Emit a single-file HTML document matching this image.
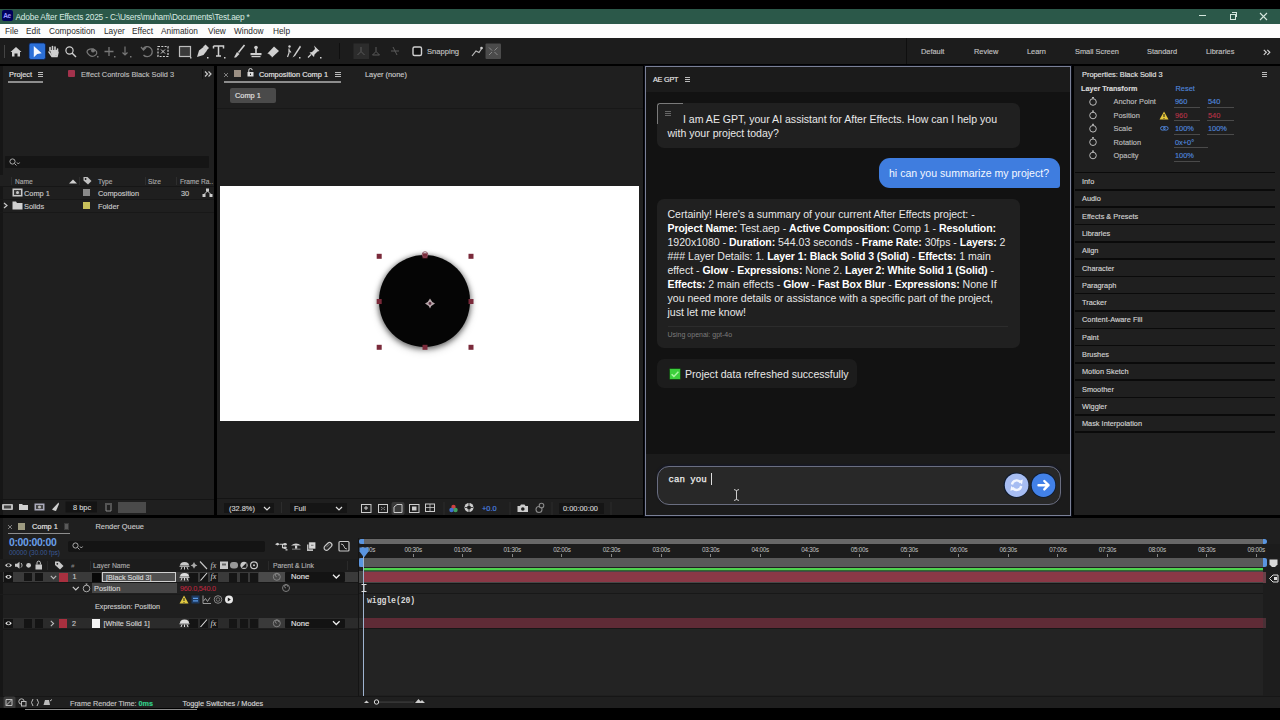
<!DOCTYPE html>
<html><head><meta charset="utf-8">
<style>
*{margin:0;padding:0;box-sizing:border-box}
html,body{width:1280px;height:720px;overflow:hidden;background:#000;font-family:"Liberation Sans",sans-serif;color:#c8c8c8}
.a{position:absolute;white-space:nowrap}
svg.a{overflow:visible}
#title{left:0;top:9px;width:1280px;height:15px;background:#2b5849}
#menu{left:0;top:24px;width:1280px;height:14px;background:#fcfcfc}
.m{top:2px;font-size:8.3px;color:#2a2a2a;line-height:10px}
#tool{left:0;top:38px;width:1280px;height:26px;background:#1c1c1c}
.pn{background:#1f1f1f}
.t{font-size:7.4px;color:#c9c9c9;line-height:9px;-webkit-text-stroke:0.15px currentColor}
</style></head><body>
<style>.ch{font-size:10.55px;color:#e8e8e8;line-height:12px}.ch b{font-weight:bold;color:#fff;letter-spacing:-0.1px}</style>
<!-- title bar -->
<div class="a" id="title">
  <div class="a" style="left:1.5px;top:1px;width:11px;height:11px;background:#00005b;border-radius:2px;color:#9999ff;font-size:6.5px;font-weight:bold;line-height:11px;text-align:center;letter-spacing:-0.3px">Ae</div>
  <div class="a" style="left:15.5px;top:1.5px;font-size:8.3px;color:#d8ebe2;line-height:13px;letter-spacing:-0.17px">Adobe After Effects 2025 - C:\Users\muham\Documents\Test.aep *</div>
  <div class="a" style="left:1199px;top:6px;width:7px;height:1px;background:#d5e6de"></div>
  <div class="a" style="left:1230px;top:5px;width:6px;height:6px;border:1px solid #d5e6de"></div>
  <div class="a" style="left:1232px;top:3px;width:5px;height:5px;border-top:1px solid #d5e6de;border-right:1px solid #d5e6de"></div>
  <svg class="a" style="left:1259px;top:3px" width="9" height="9"><path d="M1 1L8 8M8 1L1 8" stroke="#d5e6de" stroke-width="1.1"/></svg>
</div>
<div class="a" id="menu">
  <div class="a m" style="left:5px">File</div>
  <div class="a m" style="left:26px">Edit</div>
  <div class="a m" style="left:49px">Composition</div>
  <div class="a m" style="left:104px">Layer</div>
  <div class="a m" style="left:132px">Effect</div>
  <div class="a m" style="left:161px">Animation</div>
  <div class="a m" style="left:208px">View</div>
  <div class="a m" style="left:234px">Window</div>
  <div class="a m" style="left:273px">Help</div>
</div>
<div class="a" id="tool">
  <div class="a" style="left:4px;top:7px;width:1px;height:13px;background:#444"></div>
  <svg class="a" style="left:0;top:0" width="340" height="26">
    <g fill="#d0d0d0" stroke="none">
      <!-- home -->
      <path d="M10.5 14L16 9L21.5 14L20 14L20 18.5L17.5 18.5L17.5 15.5L14.5 15.5L14.5 18.5L12 18.5L12 14Z"/>
    </g>
    <rect x="29" y="5" width="16.5" height="16.5" rx="2" fill="#2c70d8" stroke="#0b2250" stroke-width="0.8"/>
    <path d="M33.8 8L41.7 15.3L37.2 16L33.8 19.3Z" fill="#f4f8ff"/>
    <!-- hand -->
    <path d="M50 12.5L50 9.5M52.5 12L52.5 8.5M55 12L55 9M57.5 13L57.5 11M49 14L52 18.5L57 18.5L58 14" stroke="#d0d0d0" stroke-width="1.6" fill="none" stroke-linecap="round"/>
    <path d="M50 12L58 12L57.5 17.5L52 18.5Z" fill="#d0d0d0"/>
    <!-- magnifier -->
    <circle cx="69.5" cy="12.5" r="3.6" stroke="#d0d0d0" stroke-width="1.2" fill="none"/>
    <path d="M72 15L76 19" stroke="#d0d0d0" stroke-width="1.4"/>
    <!-- orbit (dim) -->
    <path d="M87 14C87 11 92 10 95 12C98 14 97 17 94 18C91 19 88 17 87 14Z" stroke="#777" stroke-width="1.2" fill="none"/>
    <circle cx="93" cy="12.5" r="2" fill="#777"/>
    <rect x="97" y="18" width="1.5" height="1.5" fill="#777"/>
    <!-- plus -->
    <path d="M109 9L109 18M104.5 13.5L113.5 13.5" stroke="#777" stroke-width="1.3"/>
    <rect x="114" y="18" width="1.5" height="1.5" fill="#777"/>
    <!-- down arrow -->
    <path d="M125 8.5L125 17M122.5 14.5L125 17L127.5 14.5" stroke="#777" stroke-width="1.2" fill="none"/>
    <rect x="130" y="18" width="1.5" height="1.5" fill="#777"/>
    <!-- rotate -->
    <path d="M143 11A5 5 0 1 1 143.5 17" stroke="#777" stroke-width="1.3" fill="none"/>
    <path d="M141 9L143.5 12L146 9.5" stroke="#777" stroke-width="1.2" fill="none"/>
    <!-- dotted box -->
    <rect x="158" y="8.5" width="10" height="10" stroke="#d0d0d0" stroke-width="1.2" stroke-dasharray="2 1.3" fill="none"/>
    <path d="M161 11.5L165 15.5M165 11.5L161 15.5" stroke="#d0d0d0" stroke-width="1"/>
    <!-- rect -->
    <rect x="179.5" y="8.5" width="11" height="10" stroke="#bdbdbd" stroke-width="1.2" fill="#3a3a3a"/>
    <rect x="190" y="19" width="1.5" height="1.5" fill="#bdbdbd"/>
    <!-- pen -->
    <path d="M197 19L199 12.5L203.5 9L207 12.5L203.5 17Z" fill="#d0d0d0"/>
    <path d="M203 9L205.5 6.5L209 10L206.5 12.5" fill="#d0d0d0"/>
    <rect x="207" y="19" width="1.5" height="1.5" fill="#d0d0d0"/>
    <!-- T -->
    <path d="M213.5 8L223.5 8L223.5 10.5M213.5 8L213.5 10.5M218.5 8L218.5 18M216 18L221 18" stroke="#d0d0d0" stroke-width="1.5" fill="none"/>
    <rect x="224" y="19" width="1.5" height="1.5" fill="#d0d0d0"/>
    <!-- brush -->
    <path d="M244.5 7L238.5 14.5" stroke="#d0d0d0" stroke-width="1.6"/>
    <path d="M237 14L239.5 16L236 19.5L234 19.5Z" fill="#d0d0d0"/>
    <!-- stamp -->
    <circle cx="256" cy="9.5" r="1.8" fill="#d0d0d0"/>
    <rect x="255.2" y="10" width="1.6" height="5" fill="#d0d0d0"/>
    <rect x="250.5" y="15" width="11" height="2.2" fill="#d0d0d0"/>
    <rect x="251.5" y="18" width="9" height="1.2" fill="#d0d0d0"/>
    <!-- eraser -->
    <path d="M267.5 15.5L274 8.5L279 13L272 19.5Z" fill="#d0d0d0"/>
    <path d="M268.5 15.5L272 19L271 19.5L268 16.5Z" fill="#1c1c1c"/>
    <!-- puppet -->
    <circle cx="289.5" cy="8.5" r="1.2" fill="#d0d0d0"/>
    <path d="M289 10.5L289 15L287.5 19M289 12L291 14.5" stroke="#d0d0d0" stroke-width="1.2" fill="none"/>
    <path d="M300 7.5L294 17L292.5 19.5L295 18L301 9" fill="#d0d0d0"/>
    <rect x="299" y="19" width="1.5" height="1.5" fill="#d0d0d0"/>
    <!-- pin -->
    <path d="M314 7.5L319.5 13L317.5 13.5L314.5 16.5L314 19L309.5 14.5L312 14L315 11L314.5 9Z" fill="#d0d0d0"/>
    <path d="M311 16.5L308 19.5" stroke="#d0d0d0" stroke-width="1.2"/>
    <rect x="320" y="19" width="1.5" height="1.5" fill="#d0d0d0"/>
    <!-- sep -->
    <rect x="339" y="5" width="1" height="16" fill="#0f0f0f"/>
    <!-- axis buttons -->
    <rect x="353.5" y="5.5" width="15.5" height="15.5" fill="#2c2c2c"/>
    <path d="M361 9L361 13.5L357.5 17M361 13.5L364.5 17" stroke="#5a5a5a" stroke-width="1" fill="none"/>
    <path d="M376 9L376 13.5L372.5 17M376 13.5L379.5 17M372.5 17L379.5 17" stroke="#5a5a5a" stroke-width="1" fill="none"/>
    <path d="M393 9L397 17M391 13L399 13" stroke="#5a5a5a" stroke-width="1" fill="none"/>
    <rect x="413" y="9" width="8.5" height="8.5" rx="1.5" stroke="#d0d0d0" stroke-width="1.4" fill="#111"/>
    <path d="M472 18L476 13L479 14.5L482 10" stroke="#bdbdbd" stroke-width="1.2" fill="none"/>
    <circle cx="481.5" cy="10" r="1.3" fill="#d0d0d0"/>
    <rect x="485.5" y="5.5" width="15.5" height="15.5" rx="1" fill="#4b4b4b"/>
    <path d="M489 9.5L492 12.5M497.5 9.5L494.5 12.5M489 17L492 14M497.5 17L494.5 14" stroke="#8a8a8a" stroke-width="1"/>
  </svg>
  <div class="a t" style="left:427px;top:9px;font-size:7.6px;color:#c0c0c0">Snapping</div>
  <div class="a" style="left:906px;top:0;width:1px;height:26px;background:#0f0f0f"></div>
  <div class="a t" style="left:921px;top:9px;color:#c0c0c0">Default</div>
  <div class="a t" style="left:974px;top:9px;color:#c0c0c0">Review</div>
  <div class="a t" style="left:1027px;top:9px;color:#c0c0c0">Learn</div>
  <div class="a t" style="left:1075px;top:9px;color:#c0c0c0">Small Screen</div>
  <div class="a t" style="left:1147px;top:9px;color:#c0c0c0">Standard</div>
  <div class="a t" style="left:1206px;top:9px;color:#c0c0c0">Libraries</div>
  <svg class="a" style="left:1262.5px;top:10.5px" width="8" height="7"><path d="M0.8 0.8L3.3 3.3L0.8 5.8M4.3 0.8L6.8 3.3L4.3 5.8" stroke="#d0d0d0" stroke-width="1.2" fill="none"/></svg>
</div>
<!-- ============ PROJECT PANEL ============ -->
<div class="a pn" style="left:0;top:66px;width:214px;height:449px">
  <div class="a" style="left:0;top:0;width:3px;height:449px;background:#161616"></div>
  <div class="a t" style="left:9px;top:4px;color:#e0e0e0">Project</div>
  <div class="a" style="left:38px;top:6px;width:5px;height:1px;background:#bbb;box-shadow:0 2px 0 #bbb,0 4px 0 #bbb"></div>
  <div class="a" style="left:8px;top:15px;width:35px;height:2px;background:#8d8d8d"></div>
  <div class="a" style="left:68px;top:4px;width:7px;height:7px;background:#a3324c;border-radius:1px"></div>
  <div class="a t" style="left:81px;top:4px;color:#bdbdbd">Effect Controls Black Solid 3</div>
  <div class="a" style="left:202px;top:3px;width:1px;height:10px;background:#111"></div>
  <svg class="a" style="left:204px;top:4px" width="8" height="8"><path d="M1 1.5L3.5 4L1 6.5M4.5 1.5L7 4L4.5 6.5" stroke="#c8c8c8" stroke-width="1.2" fill="none"/></svg>
  <!-- search -->
  <div class="a" style="left:5px;top:90px;width:204px;height:12px;background:#151515;border-radius:1px"></div>
  <svg class="a" style="left:9px;top:92px" width="12" height="9"><circle cx="3.5" cy="3.5" r="2.6" stroke="#aaa" stroke-width="1" fill="none"/><path d="M5.5 5.5L7.5 7.5M8 4.5L9.3 6L10.6 4.5" stroke="#aaa" stroke-width="1" fill="none"/></svg>
  <!-- headers -->
  <div class="a" style="left:0;top:109px;width:214px;height:12px;background:#1f1f1f;border-bottom:1px solid #161616"></div>
  <div class="a" style="left:11px;top:111px;width:1px;height:8px;background:#2e2e2e"></div>
  <div class="a t" style="left:15px;top:111px;font-size:6.6px;color:#a9a9a9">Name</div>
  <svg class="a" style="left:69px;top:113px" width="8" height="5"><path d="M0 4.5L4 0.5L8 4.5Z" fill="#d0d0d0"/></svg>
  <div class="a" style="left:79px;top:111px;width:1px;height:8px;background:#2e2e2e"></div>
  <svg class="a" style="left:83px;top:110px" width="9" height="9"><path d="M0.5 1L4.5 1L8.5 5L5 8.5L0.5 4.5Z" fill="#c0c0c0"/><circle cx="2.6" cy="3" r="0.9" fill="#1f1f1f"/></svg>
  <div class="a t" style="left:98px;top:111px;font-size:6.6px;color:#a9a9a9">Type</div>
  <div class="a" style="left:145px;top:111px;width:1px;height:8px;background:#2e2e2e"></div>
  <div class="a t" style="left:148px;top:111px;font-size:6.6px;color:#a9a9a9">Size</div>
  <div class="a" style="left:176px;top:111px;width:1px;height:8px;background:#2e2e2e"></div>
  <div class="a t" style="left:180px;top:111px;font-size:6.6px;color:#a9a9a9">Frame Ra..</div>
  <!-- rows -->
  <div class="a" style="left:0;top:133px;width:214px;height:1px;background:#181818"></div>
  <div class="a" style="left:0;top:146px;width:214px;height:1px;background:#181818"></div>
  <svg class="a" style="left:12px;top:122px" width="11" height="9"><rect x="0.5" y="0.5" width="10" height="8" fill="#c8c8c8"/><rect x="2" y="2" width="7" height="5" fill="#3a3a3a"/><circle cx="5.5" cy="4.5" r="1.5" fill="#c8c8c8"/></svg>
  <div class="a t" style="left:24px;top:123px;color:#c8c8c8">Comp 1</div>
  <div class="a" style="left:83px;top:123px;width:7px;height:7px;background:#8a8a8a"></div>
  <div class="a t" style="left:98px;top:123px;color:#c8c8c8">Composition</div>
  <div class="a t" style="left:181px;top:123px;color:#c8c8c8">30</div>
  <svg class="a" style="left:202px;top:122px" width="11" height="10"><rect x="4" y="0.5" width="3" height="3" fill="#ccc"/><rect x="0.5" y="6" width="3" height="3" fill="#ccc"/><rect x="7.5" y="6" width="3" height="3" fill="#ccc"/><path d="M5.5 3L2 6.5M5.5 3L9 6.5" stroke="#ccc" stroke-width="1"/></svg>
  <svg class="a" style="left:3px;top:136px" width="5" height="7"><path d="M1 1L4 3.5L1 6" stroke="#c8c8c8" stroke-width="1.2" fill="none"/></svg>
  <svg class="a" style="left:12px;top:135px" width="11" height="9"><path d="M0.5 0.5L4 0.5L5 2L10.5 2L10.5 8.5L0.5 8.5Z" fill="#d0d0d0"/></svg>
  <div class="a t" style="left:24px;top:136px;color:#c8c8c8">Solids</div>
  <div class="a" style="left:83px;top:136px;width:7px;height:7px;background:#c8c05a"></div>
  <div class="a t" style="left:98px;top:136px;color:#c8c8c8">Folder</div>
  <!-- bottom bar -->
  <div class="a" style="left:0;top:433px;width:214px;height:1px;background:#141414"></div>
  <svg class="a" style="left:0;top:434px" width="214" height="15">
    <rect x="2" y="4" width="11" height="6" rx="1" fill="#bdbdbd"/><rect x="4" y="5.5" width="7" height="3" fill="#444"/>
    <path d="M19 4L22 4L23 5L28 5L28 10L19 10Z" fill="#cfcfcf"/>
    <rect x="34.5" y="3.5" width="10" height="7" fill="#aab"/><rect x="36" y="5" width="7" height="4" fill="#444"/><circle cx="39.5" cy="7" r="1.5" fill="#bbb"/>
    <path d="M58.5 2.5L52 9.5L54 10.5L56 11L59 4Z" fill="#cfcfcf"/>
    <rect x="65.5" y="1.5" width="31.5" height="11" fill="#141414"/>
    <path d="M105 4L112 4M106 5L106 11L111 11L111 5" stroke="#8a8a8a" stroke-width="1" fill="none"/>
    <rect x="118" y="2" width="28" height="11" fill="#4a4a4a"/>
  </svg>
  <div class="a t" style="left:73px;top:437px;color:#d0d0d0">8 bpc</div>
</div>
<!-- ============ COMP PANEL ============ -->
<div class="a pn" style="left:217px;top:66px;width:426px;height:449px;overflow:hidden">
  <svg class="a" style="left:6px;top:6px" width="6" height="6"><path d="M1 1L5 5M5 1L1 5" stroke="#888" stroke-width="0.9"/></svg>
  <div class="a" style="left:17px;top:4px;width:6.5px;height:7px;background:#9b8f83"></div>
  <svg class="a" style="left:30px;top:2px" width="7" height="9"><path d="M1.8 4L1.8 2.2A1.7 1.7 0 0 1 5.2 2.2" stroke="#ddd" stroke-width="1" fill="none"/><rect x="0.5" y="4" width="6" height="4.5" fill="#ddd"/><rect x="3" y="5.5" width="1" height="1.5" fill="#1f1f1f"/></svg>
  <div class="a t" style="left:42px;top:4px;color:#e6e6e6">Composition Comp 1</div>
  <div class="a" style="left:118px;top:6px;width:6px;height:1px;background:#bbb;box-shadow:0 2px 0 #bbb,0 4px 0 #bbb"></div>
  <div class="a" style="left:7px;top:14.5px;width:117px;height:2px;background:#8d8d8d"></div>
  <div class="a t" style="left:148px;top:4px;color:#c8c8c8">Layer (none)</div>
  <div class="a" style="left:12.5px;top:21.5px;width:46px;height:15.5px;background:#4a4a4a;border-radius:2px"></div>
  <div class="a t" style="left:18px;top:25px;color:#e0e0e0">Comp 1</div>
  <div class="a" style="left:0;top:42px;width:426px;height:1px;background:#181818"></div>
  <!-- canvas -->
  <div class="a" style="left:3px;top:120px;width:419px;height:235px;background:#fff"></div>
  <!-- bottom bar -->
  <div class="a" style="left:0;top:431.5px;width:426px;height:1px;background:#141414"></div>
  <div class="a" style="left:7px;top:437px;width:50px;height:10px;background:#151515"></div>
  <div class="a t" style="left:12px;top:438px;color:#d0d0d0">(32.8%)</div>
  <svg class="a" style="left:46px;top:440px" width="8" height="5"><path d="M1 1L4 4L7 1" stroke="#ddd" stroke-width="1.2" fill="none"/></svg>
  <div class="a" style="left:64px;top:436px;width:1px;height:11px;background:#2c2c2c"></div>
  <div class="a" style="left:73px;top:437px;width:57px;height:10px;background:#151515"></div>
  <div class="a t" style="left:77px;top:438px;color:#d0d0d0">Full</div>
  <svg class="a" style="left:118px;top:440px" width="8" height="5"><path d="M1 1L4 4L7 1" stroke="#ddd" stroke-width="1.2" fill="none"/></svg>
  <svg class="a" style="left:140px;top:433.5px" width="290" height="17">
    <rect x="4.5" y="4.5" width="9.5" height="8" stroke="#ccc" stroke-width="1" fill="none"/><path d="M9 6L9 10M7 8L11 8" stroke="#ccc" stroke-width="1"/>
    <rect x="21.5" y="4.5" width="9" height="8" stroke="#ccc" stroke-width="1" fill="none"/><path d="M24 7L28 10M28 7L24 10" stroke="#ccc" stroke-width="0.8" stroke-dasharray="1 1"/>
    <rect x="34.5" y="2" width="13" height="13" rx="2" fill="#3a3a3a"/><path d="M37 12.5L37 7L40 4.5L45 4.5L45 12.5Z" stroke="#ccc" stroke-width="1" fill="none"/>
    <rect x="52.5" y="4.5" width="9.5" height="8" stroke="#ccc" stroke-width="1" fill="none"/><rect x="55" y="6.5" width="4.5" height="4" fill="#ccc"/>
    <rect x="68.5" y="4" width="9" height="7.5" stroke="#ccc" stroke-width="1" fill="none"/><path d="M73 4L73 11.5M68.5 7.5L77.5 7.5" stroke="#ccc" stroke-width="0.8"/>
    <rect x="86.5" y="2" width="1" height="13" fill="#2c2c2c"/>
    <circle cx="96.5" cy="7" r="2.2" fill="#d04040"/><circle cx="98.5" cy="10" r="2.2" fill="#40a060"/><circle cx="94.5" cy="10" r="2.2" fill="#4070d0"/>
    <circle cx="112" cy="7.5" r="4.5" fill="#ccc"/><circle cx="112" cy="7.5" r="2" fill="#1f1f1f"/><path d="M112 3L112 5.5M116 7.5L114 7.5M108 7.5L110 7.5M112 12L112 9.5" stroke="#1f1f1f" stroke-width="0.8"/>
    <rect x="152.5" y="2" width="1" height="13" fill="#2c2c2c"/>
    <path d="M160.5 6L163 6L164 4.5L167.5 4.5L168.5 6L171 6L171 12L160.5 12Z" fill="#ccc"/><circle cx="165.8" cy="9" r="1.8" fill="#1f1f1f"/>
    <circle cx="182" cy="9.5" r="3" stroke="#888" stroke-width="1.1" fill="none"/><circle cx="184.5" cy="5.5" r="2.3" stroke="#888" stroke-width="1.1" fill="#1f1f1f"/>
    <rect x="194.5" y="2" width="1" height="13" fill="#2c2c2c"/>
    <rect x="202" y="3" width="45" height="11" fill="#151515"/>
    <rect x="253.5" y="2" width="1" height="13" fill="#2c2c2c"/>
  </svg>
  <div class="a t" style="left:265px;top:438px;color:#4d86e6">+0.0</div>
  <div class="a t" style="left:346px;top:438px;color:#d0d0d0">0:00:00:00</div>
</div>
<!-- comp layer on canvas -->
<div class="a" style="left:378.8px;top:255px;width:91.5px;height:91.5px;border-radius:50%;background:#050505;box-shadow:0 1px 5px 1px rgba(0,0,0,0.45),0 3px 9px rgba(0,0,0,0.25)"></div>
<svg class="a" style="left:360px;top:240px" width="130" height="125">
  <g fill="#7a2a3a">
    <rect x="16.7" y="13.8" width="5" height="5"/><rect x="108.5" y="13.8" width="5" height="5"/>
    <rect x="16.7" y="104.8" width="5" height="5"/><rect x="108.5" y="104.8" width="5" height="5"/>
    <rect x="16.7" y="59" width="5" height="5"/><rect x="108.5" y="59" width="5" height="5"/>
    <rect x="62.5" y="13.3" width="5" height="5"/><rect x="62.5" y="104.8" width="5" height="5"/>
  </g>
  <circle cx="65" cy="14.5" r="2.8" stroke="#8a5060" stroke-width="0.9" fill="none"/>
  <path d="M70 58.5Q71.5 62 75 63.5Q71.5 65 70 68.5Q68.5 65 65 63.5Q68.5 62 70 58.5Z" fill="#b8a8ac"/>
  <circle cx="70" cy="63.5" r="1.4" fill="#5a3040"/>
</svg>
<!-- ============ AE GPT PANEL ============ -->
<div class="a" style="left:645px;top:66px;width:426px;height:450px;background:#1b1b1b;border:1px solid #7a8096;box-shadow:0 0 0 1px #0a0c16;overflow:hidden">
  <div class="a t" style="left:7px;top:8px;font-size:7.2px;color:#e8e8e8;letter-spacing:-0.2px">AE GPT</div>
  <div class="a" style="left:39px;top:10px;width:5px;height:1px;background:#bbb;box-shadow:0 2px 0 #bbb,0 4px 0 #bbb"></div>
  <div class="a" style="left:0;top:25px;width:424px;height:362px;background:#121212"></div>
  <!-- bubble 1 -->
  <div class="a" style="left:10.5px;top:36px;width:363px;height:45px;background:#202020;border-radius:7px"></div>
  <div class="a" style="left:10.5px;top:36px;width:26px;height:21px;border-top:1.5px solid #7a7a7a;border-left:1.5px solid #7a7a7a;border-radius:3px 0 0 0"></div>
  <div class="a" style="left:19px;top:44px;width:6px;height:1px;background:#666;box-shadow:0 2px 0 #666,0 4px 0 #666"></div>
  <div class="a ch" style="left:37px;top:45.7px">I am AE GPT, your AI assistant for After Effects. How can I help you</div>
  <div class="a ch" style="left:21.5px;top:59.6px">with your project today?</div>
  <!-- user bubble -->
  <div class="a" style="left:233px;top:91px;width:181px;height:29.5px;background:#3f7ddf;border-radius:11px 11px 3px 11px"></div>
  <div class="a ch" style="left:243px;top:100.2px;color:#f4f8ff">hi can you summarize my project?</div>
  <!-- bubble 2 -->
  <div class="a" style="left:10.5px;top:131.5px;width:363px;height:149px;background:#202020;border-radius:7px"></div>
  <div class="a ch" style="left:21.5px;top:141.2px;line-height:13.9px">Certainly! Here's a summary of your current After Effects project: -<br><b>Project Name:</b> Test.aep - <b>Active Composition:</b> Comp 1 - <b>Resolution:</b><br>1920x1080 - <b>Duration:</b> 544.03 seconds - <b>Frame Rate:</b> 30fps - <b>Layers:</b> 2<br>### Layer Details: 1. <b>Layer 1: Black Solid 3 (Solid)</b> - <b>Effects:</b> 1 main<br>effect - <b>Glow</b> - <b>Expressions:</b> None 2. <b>Layer 2: White Solid 1 (Solid)</b> -<br><b>Effects:</b> 2 main effects - <b>Glow</b> - <b>Fast Box Blur</b> - <b>Expressions:</b> None If<br>you need more details or assistance with a specific part of the project,<br>just let me know!</div>
  <div class="a" style="left:21.5px;top:258.5px;width:340px;height:1px;background:#2c2c2c"></div>
  <div class="a" style="left:21.5px;top:264px;font-size:7px;color:#7c7c7c">Using openai: gpt-4o</div>
  <!-- bubble 3 -->
  <div class="a" style="left:10.5px;top:291.5px;width:200px;height:29px;background:#1c1c1c;border-radius:7px"></div>
  <svg class="a" style="left:23px;top:300.5px" width="12" height="12"><rect x="0.5" y="0.5" width="11" height="11" rx="0.8" fill="#3ccf3c" stroke="#0a300a" stroke-width="0.6"/><path d="M2.6 6.2L4.9 8.4L9.4 3.8" stroke="#a8f5a0" stroke-width="1.5" fill="none"/></svg>
  <div class="a ch" style="left:39px;top:301px">Project data refreshed successfully</div>
  <!-- input -->
  <div class="a" style="left:10.5px;top:399px;width:404px;height:39px;background:#282828;border:1px solid #6a6e80;border-radius:12px;box-shadow:0 -1px 2px #15182a"></div>
  <div class="a" style="left:22.5px;top:407.5px;font-family:'Liberation Mono',monospace;font-size:9.1px;color:#f0f0f0;line-height:10px;-webkit-text-stroke:0.25px #f0f0f0">can you </div>
  <div class="a" style="left:65px;top:406px;width:1px;height:12px;background:#ddd"></div>
  <svg class="a" style="left:87px;top:422px" width="7" height="12"><path d="M1 0.5L3.5 1.5L6 0.5M3.5 1.5L3.5 10.5M1 11.5L3.5 10.5L6 11.5" stroke="#ccc" stroke-width="1" fill="none"/></svg>
  <svg class="a" style="left:356.5px;top:405.3px" width="56" height="26">
    <circle cx="13.2" cy="13.2" r="12.6" fill="#0c1a30"/>
    <circle cx="13.6" cy="13.2" r="11.8" fill="#a7bdf2"/>
    <path d="M9 12.5A4.6 4.6 0 0 1 17.6 10.8M18.2 14A4.6 4.6 0 0 1 9.6 15.6" stroke="#f4f7ff" stroke-width="2.3" fill="none"/>
    <path d="M15.6 9L19.8 7.6L19 12.4Z M11.6 17.4L7.4 18.8L8.2 14Z" fill="#f4f7ff"/>
    <circle cx="40.5" cy="13.2" r="12.6" fill="#0c1a30"/>
    <circle cx="40.5" cy="13.2" r="11.8" fill="#4281e8"/>
    <path d="M35.5 13.2L45.5 13.2M41.3 9L45.5 13.2L41.3 17.4" stroke="#fff" stroke-width="2.4" fill="none" stroke-linecap="round" stroke-linejoin="round"/>
  </svg>
</div>
<!-- ============ PROPERTIES PANEL ============ -->
<div class="a pn" style="left:1074px;top:66px;width:206px;height:449px;overflow:hidden">
  <div class="a t" style="left:8px;top:3.5px;color:#e2e2e2">Properties: Black Solid 3</div>
  <div class="a" style="left:188px;top:5.5px;width:5px;height:1px;background:#bbb;box-shadow:0 2px 0 #bbb,0 4px 0 #bbb"></div>
  <div class="a t" style="left:7px;top:18px;font-weight:bold;color:#d8d8d8;font-size:7.2px">Layer Transform</div>
  <div class="a t" style="left:101.5px;top:18px;color:#4f86dc">Reset</div>
  <svg class="a" style="left:14px;top:29.5px" width="10" height="70">
    <g stroke="#bbb" stroke-width="1" fill="none">
      <circle cx="5" cy="6" r="3.3"/><path d="M4 1.5L6 1.5M5 1.5L5 2.7"/>
      <circle cx="5" cy="19.5" r="3.3"/><path d="M4 15L6 15M5 15L5 16.2"/>
      <circle cx="5" cy="32.8" r="3.3"/><path d="M4 28.3L6 28.3M5 28.3L5 29.5"/>
      <circle cx="5" cy="46.2" r="3.3"/><path d="M4 41.7L6 41.7M5 41.7L5 42.9"/>
      <circle cx="5" cy="59.5" r="3.3"/><path d="M4 55L6 55M5 55L5 56.2"/>
    </g>
  </svg>
  <div class="a t" style="left:39.5px;top:31px;color:#bdbdbd">Anchor Point</div>
  <div class="a t" style="left:39.5px;top:44.5px;color:#bdbdbd">Position</div>
  <div class="a t" style="left:39.5px;top:58px;color:#bdbdbd">Scale</div>
  <div class="a t" style="left:39.5px;top:71.5px;color:#bdbdbd">Rotation</div>
  <div class="a t" style="left:39.5px;top:84.5px;color:#bdbdbd">Opacity</div>
  <svg class="a" style="left:85px;top:44.5px" width="10" height="9"><path d="M5 0.5L9.5 8.5L0.5 8.5Z" fill="#e3c53a"/><path d="M5 3L5 6M5 7L5 7.8" stroke="#1c1c1c" stroke-width="1"/></svg>
  <svg class="a" style="left:85.5px;top:59.5px" width="9" height="5"><rect x="0.6" y="0.6" width="4.5" height="3.5" rx="1.7" stroke="#4f86dc" stroke-width="1" fill="none"/><rect x="3.6" y="0.6" width="4.5" height="3.5" rx="1.7" stroke="#4f86dc" stroke-width="1" fill="none"/></svg>
  <div class="a t" style="left:101px;top:31px;color:#4f86dc">960</div>
  <div class="a t" style="left:134px;top:31px;color:#4f86dc">540</div>
  <div class="a t" style="left:101px;top:44.5px;color:#b33246">960</div>
  <div class="a t" style="left:134px;top:44.5px;color:#b33246">540</div>
  <div class="a t" style="left:101px;top:58px;color:#4f86dc">100%</div>
  <div class="a t" style="left:134px;top:58px;color:#4f86dc">100%</div>
  <div class="a t" style="left:101px;top:71.5px;color:#4f86dc">0x+0°</div>
  <div class="a t" style="left:101px;top:84.5px;color:#4f86dc">100%</div>
  <div class="a" style="left:99.5px;top:40.5px;width:26.5px;height:1px;background:#4a4a4a"></div>
  <div class="a" style="left:133px;top:40.5px;width:27px;height:1px;background:#4a4a4a"></div>
  <div class="a" style="left:99.5px;top:54px;width:26.5px;height:1px;background:#4a4a4a"></div>
  <div class="a" style="left:133px;top:54px;width:27px;height:1px;background:#4a4a4a"></div>
  <div class="a" style="left:99.5px;top:67.5px;width:26.5px;height:1px;background:#4a4a4a"></div>
  <div class="a" style="left:133px;top:67.5px;width:27px;height:1px;background:#4a4a4a"></div>
  <div class="a" style="left:99.5px;top:81px;width:34px;height:1px;background:#4a4a4a"></div>
  <div class="a" style="left:99.5px;top:94.5px;width:26.5px;height:1px;background:#4a4a4a"></div>
  <div class="a" style="left:1px;top:105.80px;width:200px;height:1.6px;background:#0a0a0a"></div>
  <div class="a" style="left:1px;top:123.10px;width:200px;height:1.6px;background:#0a0a0a"></div>
  <div class="a" style="left:1px;top:140.40px;width:200px;height:1.6px;background:#0a0a0a"></div>
  <div class="a" style="left:1px;top:157.70px;width:200px;height:1.6px;background:#0a0a0a"></div>
  <div class="a" style="left:1px;top:175.00px;width:200px;height:1.6px;background:#0a0a0a"></div>
  <div class="a" style="left:1px;top:192.30px;width:200px;height:1.6px;background:#0a0a0a"></div>
  <div class="a" style="left:1px;top:209.60px;width:200px;height:1.6px;background:#0a0a0a"></div>
  <div class="a" style="left:1px;top:226.90px;width:200px;height:1.6px;background:#0a0a0a"></div>
  <div class="a" style="left:1px;top:244.20px;width:200px;height:1.6px;background:#0a0a0a"></div>
  <div class="a" style="left:1px;top:261.50px;width:200px;height:1.6px;background:#0a0a0a"></div>
  <div class="a" style="left:1px;top:278.80px;width:200px;height:1.6px;background:#0a0a0a"></div>
  <div class="a" style="left:1px;top:296.10px;width:200px;height:1.6px;background:#0a0a0a"></div>
  <div class="a" style="left:1px;top:313.40px;width:200px;height:1.6px;background:#0a0a0a"></div>
  <div class="a" style="left:1px;top:330.70px;width:200px;height:1.6px;background:#0a0a0a"></div>
  <div class="a" style="left:1px;top:348.00px;width:200px;height:1.6px;background:#0a0a0a"></div>
  <div class="a" style="left:1px;top:365.30px;width:200px;height:1.6px;background:#0a0a0a"></div>
  <div class="a t" style="left:8px;top:111.00px;color:#d2d2d2;font-size:7.35px">Info</div>
  <div class="a t" style="left:8px;top:128.30px;color:#d2d2d2;font-size:7.35px">Audio</div>
  <div class="a t" style="left:8px;top:145.60px;color:#d2d2d2;font-size:7.35px">Effects &amp; Presets</div>
  <div class="a t" style="left:8px;top:162.90px;color:#d2d2d2;font-size:7.35px">Libraries</div>
  <div class="a t" style="left:8px;top:180.20px;color:#d2d2d2;font-size:7.35px">Align</div>
  <div class="a t" style="left:8px;top:197.50px;color:#d2d2d2;font-size:7.35px">Character</div>
  <div class="a t" style="left:8px;top:214.80px;color:#d2d2d2;font-size:7.35px">Paragraph</div>
  <div class="a t" style="left:8px;top:232.10px;color:#d2d2d2;font-size:7.35px">Tracker</div>
  <div class="a t" style="left:8px;top:249.40px;color:#d2d2d2;font-size:7.35px">Content-Aware Fill</div>
  <div class="a t" style="left:8px;top:266.70px;color:#d2d2d2;font-size:7.35px">Paint</div>
  <div class="a t" style="left:8px;top:284.00px;color:#d2d2d2;font-size:7.35px">Brushes</div>
  <div class="a t" style="left:8px;top:301.30px;color:#d2d2d2;font-size:7.35px">Motion Sketch</div>
  <div class="a t" style="left:8px;top:318.60px;color:#d2d2d2;font-size:7.35px">Smoother</div>
  <div class="a t" style="left:8px;top:335.90px;color:#d2d2d2;font-size:7.35px">Wiggler</div>
  <div class="a t" style="left:8px;top:353.20px;color:#d2d2d2;font-size:7.35px">Mask Interpolation</div>

</div>
<!-- ============ TIMELINE ============ -->
<div class="a pn" style="left:0;top:518px;width:1280px;height:190px;overflow:hidden">
  <!-- tabs -->
  <div class="a" style="left:0;top:0;width:3px;height:178px;background:#161616"></div>
  <svg class="a" style="left:7px;top:6px" width="6" height="6"><path d="M1 1L5 5M5 1L1 5" stroke="#888" stroke-width="0.9"/></svg>
  <div class="a" style="left:18px;top:5px;width:6.5px;height:7px;background:#9d9a80"></div>
  <div class="a t" style="left:32px;top:4px;color:#e6e6e6">Comp 1</div>
  <div class="a" style="left:64px;top:5px;width:5px;height:7px;background:#5a5a5a;border:1px solid #3a3a3a"></div>
  <div class="a" style="left:8px;top:14.5px;width:62px;height:1.5px;background:#8d8d8d"></div>
  <div class="a t" style="left:95.5px;top:4px;color:#c8c8c8">Render Queue</div>
  <!-- timecode -->
  <div class="a" style="left:9px;top:19px;font-size:10.4px;font-weight:bold;color:#6a9fea;line-height:12px;letter-spacing:-0.35px">0:00:00:00</div>
  <div class="a" style="left:9px;top:30.5px;font-size:6.5px;color:#3a5a96;line-height:7px">00000 (30.00 fps)</div>
  <div class="a" style="left:68px;top:22.5px;width:197px;height:11.5px;background:#141414;border-radius:2px"></div>
  <svg class="a" style="left:72px;top:24px" width="12" height="9"><circle cx="3.5" cy="3.5" r="2.6" stroke="#aaa" stroke-width="1" fill="none"/><path d="M5.5 5.5L7.5 7.5M8 4.5L9.3 6L10.6 4.5" stroke="#aaa" stroke-width="1" fill="none"/></svg>
  <svg class="a" style="left:272px;top:20px" width="82" height="17">
    <path d="M3 6.2L5.5 4.8L8 6.2L5.5 7.6Z" fill="#d0d0d0"/>
    <path d="M8 6.2L10.5 6.2M10.5 6.2L10.5 9.8L12 9.8M10.5 6.2L12 6.2" stroke="#d0d0d0" stroke-width="1.1" fill="none"/>
    <ellipse cx="13" cy="6.2" rx="1.8" ry="1.2" fill="#d0d0d0"/><ellipse cx="13" cy="9.8" rx="1.8" ry="1.2" fill="#d0d0d0"/>
    <rect x="13.5" y="11" width="2" height="1.6" fill="#aaa"/>
    <path d="M19 7.5Q24 3.5 29 7.5Z" fill="#d0d0d0"/><rect x="23" y="7.5" width="2.2" height="3.5" fill="#d0d0d0"/><rect x="20" y="10.5" width="8.5" height="1.4" fill="#666"/>
    <rect x="35" y="6.5" width="6" height="6.5" fill="#bbb"/><rect x="36.8" y="4" width="7" height="7" fill="#d8d8d8" stroke="#1f1f1f" stroke-width="0.6"/><rect x="39" y="6.8" width="2.5" height="0.8" fill="#555"/>
    <rect x="51.5" y="6" width="9" height="4.8" rx="2.4" transform="rotate(-45 56 8.4)" stroke="#c8c8c8" stroke-width="1.2" fill="#2a2a2a"/>
    <path d="M54.5 9.2L57.5 6.2" stroke="#888" stroke-width="0.8"/>
    <rect x="67" y="3.5" width="10" height="9.5" rx="1" stroke="#c8c8c8" stroke-width="1.2" fill="#1a1a1a"/>
    <path d="M69 6Q71.5 6 72 8.5Q72.5 11 75 11" stroke="#c8c8c8" stroke-width="0.9" fill="none"/>
  </svg>
  <!-- header row -->
  <div class="a" style="left:0;top:41px;width:358px;height:12.5px;background:#1c1c1c"></div>
  <svg class="a" style="left:0;top:41px" width="360" height="13">
    <path d="M5 6.3C6.5 3.8 10.5 3.8 12 6.3C10.5 8.8 6.5 8.8 5 6.3Z" fill="#c8c8c8"/><circle cx="8.5" cy="6.3" r="1.4" fill="#1c1c1c"/>
    <path d="M15 4.8L17 4.8L19.5 2.8L19.5 9.8L17 7.8L15 7.8Z" fill="#c8c8c8"/><path d="M21 4A3 3 0 0 1 21 8.5" stroke="#c8c8c8" stroke-width="0.9" fill="none"/>
    <circle cx="28.6" cy="6.3" r="2.4" fill="#c8c8c8"/>
    <rect x="35.5" y="5.5" width="6.5" height="5" fill="#c8c8c8"/><path d="M37 5.5L37 3.8A1.7 1.7 0 0 1 40.4 3.8L40.4 5.5" stroke="#c8c8c8" stroke-width="1" fill="none"/>
    <rect x="47" y="2" width="1" height="9" fill="#2a2a2a"/>
    <path d="M55 2.5L59 2.5L63.5 7L60 10.5L55 6Z" fill="#c8c8c8"/><circle cx="57.3" cy="4.8" r="0.9" fill="#1c1c1c"/>
    <rect x="90" y="2" width="1" height="9" fill="#2a2a2a"/>
    <!-- switches -->
    <path d="M180 6.5A4.5 3.5 0 0 1 189 6.5Z" fill="#c8c8c8"/><path d="M182 8L181 10.5M184.5 8L184.5 10.5M187 8L188 10.5M179.5 7.3L189.5 7.3" stroke="#c8c8c8" stroke-width="1"/>
    <path d="M194 3L195.2 5.2L197.4 6.4L195.2 7.6L194 9.8L192.8 7.6L190.6 6.4L192.8 5.2Z" fill="#aaa"/>
    <path d="M200 2.5L207 10" stroke="#c8c8c8" stroke-width="1.1"/>
    <rect x="220" y="2.5" width="8" height="7.5" fill="#c8c8c8"/><rect x="222" y="4.5" width="4" height="2" fill="#666"/>
    <rect x="230" y="3" width="8" height="6.5" rx="3" fill="#999"/>
    <circle cx="244" cy="6.3" r="3.6" fill="#c8c8c8"/><path d="M241.5 8.8L246.5 3.8L246.5 8.8Z" fill="#1c1c1c"/>
    <circle cx="254" cy="6.3" r="3.4" stroke="#c8c8c8" stroke-width="1.2" fill="none"/><circle cx="254" cy="6.3" r="1" fill="#c8c8c8"/>
    <rect x="268" y="2" width="1" height="9" fill="#2a2a2a"/><rect x="347" y="2" width="1" height="9" fill="#2a2a2a"/>
  </svg>
  <div class="a" style="left:210.5px;top:43px;font-size:8px;font-style:italic;color:#c8c8c8;line-height:9px;font-family:'Liberation Serif',serif">fx</div>
  <div class="a" style="left:71px;top:44px;font-size:6px;color:#888;font-style:italic;line-height:8px">#</div>
  <div class="a t" style="left:93px;top:43px;font-size:6.8px;color:#a8a8a8">Layer Name</div>
  <div class="a t" style="left:273px;top:43px;font-size:6.8px;color:#b0b0b0">Parent &amp; Link</div>
  <!-- layer 1 row -->
  <div class="a" style="left:3px;top:53.5px;width:355px;height:10.5px;background:#3a3a3a"></div>
  <div class="a" style="left:4px;top:54px;width:9px;height:9.5px;background:#131313"></div>
  <div class="a" style="left:24px;top:54.5px;width:8px;height:8.5px;background:#141414"></div>
  <div class="a" style="left:34.5px;top:54.5px;width:8px;height:8.5px;background:#141414"></div>
  <svg class="a" style="left:50px;top:56.5px" width="7" height="5"><path d="M0.8 0.8L3.5 3.6L6.2 0.8" stroke="#bbb" stroke-width="1.1" fill="none"/></svg>
  <div class="a" style="left:58.5px;top:54.5px;width:9px;height:9px;background:#a8303f"></div>
  <div class="a t" style="left:72.5px;top:54px;font-size:7.2px;color:#c8c8c8">1</div>
  <div class="a" style="left:91.5px;top:54.5px;width:9px;height:9px;background:#080808"></div>
  <div class="a" style="left:102px;top:53.8px;width:74px;height:10.2px;border:1.3px solid #d0d0d0;background:#505050"></div>
  <div class="a t" style="left:106px;top:54.5px;color:#d8d8d8;font-size:7.2px">[Black Solid 3]</div>
  <div class="a" style="left:189.3px;top:54.5px;width:9px;height:9px;background:#141414"></div>
  <div class="a" style="left:199.5px;top:54.5px;width:8.5px;height:9px;background:#141414"></div>
  <div class="a" style="left:209.5px;top:54.5px;width:8.5px;height:9px;background:#141414"></div>
  <div class="a" style="left:229.4px;top:54.5px;width:8px;height:9px;background:#151515"></div>
  <div class="a" style="left:239.8px;top:54.5px;width:8px;height:9px;background:#151515"></div>
  <div class="a" style="left:250px;top:54.5px;width:7.6px;height:9px;background:#151515"></div>
  <div class="a" style="left:259px;top:53.5px;width:26px;height:10.5px;background:#4a4a4a"></div>
  <div class="a" style="left:285px;top:54px;width:59.5px;height:9.5px;background:#131313;border-radius:1px"></div>
  <div class="a t" style="left:291px;top:54.3px;font-size:7.6px;color:#e0e0e0">None</div>
  <!-- position row -->
  <div class="a" style="left:0;top:64.3px;width:358px;height:1px;background:#161616"></div>
  <svg class="a" style="left:72px;top:68px" width="8" height="5"><path d="M0.8 0.8L3.8 3.8L6.8 0.8" stroke="#ccc" stroke-width="1.2" fill="none"/></svg>
  <svg class="a" style="left:81.5px;top:65px" width="9" height="10"><circle cx="4.5" cy="5.5" r="3.3" stroke="#aaa" stroke-width="1" fill="none"/><path d="M3.5 1L5.5 1M4.5 1L4.5 2.2" stroke="#aaa" stroke-width="1"/></svg>
  <div class="a" style="left:92px;top:65px;width:84.5px;height:10px;background:#464646"></div>
  <div class="a t" style="left:94px;top:66px;font-size:7.4px;color:#d0d0d0">Position</div>
  <div class="a t" style="left:180px;top:66px;font-size:7.2px;color:#b3263d;letter-spacing:-0.2px">960.0,540.0</div>
  <!-- expression row -->
  <div class="a" style="left:0;top:75.5px;width:358px;height:1px;background:#1a1a1a"></div>
  <div class="a t" style="left:95px;top:83.5px;font-size:7.2px;color:#c8c8c8">Expression: Position</div>
  <svg class="a" style="left:178px;top:76px" width="60" height="12">
    <path d="M6 1.5L10.5 9.5L1.5 9.5Z" fill="#e0c840"/><path d="M6 4L6 7M6 8L6 8.8" stroke="#222" stroke-width="1"/>
    <rect x="13.5" y="1.5" width="8" height="8" fill="#1e3a60"/><path d="M15 4.3L20 4.3M15 6.8L20 6.8" stroke="#5a9ae8" stroke-width="1.2"/>
    <path d="M25 1.5L25 9.5L33 9.5M25.5 7L27.5 4.5L29.5 7.5L32 3.5" stroke="#aaa" stroke-width="0.9" fill="none"/>
    <circle cx="40" cy="5.5" r="3.8" stroke="#888" stroke-width="1" fill="none"/><circle cx="40" cy="5.5" r="1.8" stroke="#888" stroke-width="0.8" fill="none"/>
    <circle cx="51" cy="5.5" r="4" fill="#e8e8e8"/><path d="M49.8 3.5L52.8 5.5L49.8 7.5Z" fill="#1f1f1f"/>
  </svg>
  <!-- layer 2 row -->
  <div class="a" style="left:0;top:99.5px;width:358px;height:1px;background:#161616"></div>
  <div class="a" style="left:3px;top:100.3px;width:355px;height:10px;background:#2b2b2b"></div>
  <div class="a" style="left:4px;top:100.8px;width:9px;height:9.2px;background:#131313"></div>
  <div class="a" style="left:24px;top:101px;width:8px;height:8.5px;background:#141414"></div>
  <div class="a" style="left:34.5px;top:101px;width:8px;height:8.5px;background:#141414"></div>
  <svg class="a" style="left:50px;top:102px" width="5" height="7"><path d="M0.8 0.8L3.6 3.5L0.8 6.2" stroke="#bbb" stroke-width="1.1" fill="none"/></svg>
  <div class="a" style="left:58.5px;top:101px;width:8.5px;height:8.5px;background:#a8303f"></div>
  <div class="a t" style="left:72px;top:100.8px;font-size:7.2px;color:#c8c8c8">2</div>
  <div class="a" style="left:91.5px;top:101px;width:8.5px;height:8.5px;background:#f4f4f4"></div>
  <div class="a t" style="left:103.5px;top:101px;color:#d0d0d0;font-size:7.2px">[White Solid 1]</div>
  <div class="a" style="left:189.3px;top:101px;width:9px;height:8.5px;background:#141414"></div>
  <div class="a" style="left:199.5px;top:101px;width:8.5px;height:8.5px;background:#141414"></div>
  <div class="a" style="left:209.5px;top:101px;width:8.5px;height:8.5px;background:#141414"></div>
  <div class="a" style="left:229.4px;top:101px;width:8px;height:8.5px;background:#151515"></div>
  <div class="a" style="left:239.8px;top:101px;width:8px;height:8.5px;background:#151515"></div>
  <div class="a" style="left:250px;top:101px;width:7.6px;height:8.5px;background:#151515"></div>
  <div class="a" style="left:259px;top:100.3px;width:26px;height:10px;background:#3a3a3a"></div>
  <div class="a" style="left:285px;top:100.8px;width:59.5px;height:9.2px;background:#131313;border-radius:1px"></div>
  <div class="a t" style="left:291px;top:100.8px;font-size:7.6px;color:#e0e0e0">None</div>
  <div class="a" style="left:0;top:111px;width:358px;height:1px;background:#181818"></div>
  <!-- row icons svg -->
  <svg class="a" style="left:0;top:53px" width="360" height="60">
    <g fill="#e8e8e8">
      <path d="M5.3 5.8C6.8 3.3 10.2 3.3 11.7 5.8C10.2 8.3 6.8 8.3 5.3 5.8Z"/>
      <path d="M5.3 52.3C6.8 49.8 10.2 49.8 11.7 52.3C10.2 54.8 6.8 54.8 5.3 52.3Z"/>
    </g>
    <circle cx="8.5" cy="5.8" r="1.3" fill="#131313"/><circle cx="8.5" cy="52.3" r="1.3" fill="#131313"/>
    <g id="sw">
    <path d="M180 5.5A4.5 3.5 0 0 1 189 5.5Z" fill="#ddd"/><path d="M182 7L181 9.5M184.5 7L184.5 9.5M187 7L188 9.5M179.5 6.3L189.5 6.3" stroke="#ddd" stroke-width="1"/>
    <path d="M200.5 9.5L207 2" stroke="#ddd" stroke-width="1.1"/>
    </g>
    <use href="#sw" y="46.5"/>
    <g stroke="#888" stroke-width="0.9" fill="none">
      <circle cx="276.8" cy="5.8" r="3.5"/><path d="M276.8 5.8A1.6 1.6 0 1 1 278.5 4.5"/>
      <circle cx="276.8" cy="52.3" r="3.5"/><path d="M276.8 52.3A1.6 1.6 0 1 1 278.5 51"/>
      <circle cx="286" cy="17" r="3.5"/><path d="M286 17A1.6 1.6 0 1 1 287.7 15.7"/>
    </g>
    <path d="M333 3.8L336.3 7L339.6 3.8" stroke="#eee" stroke-width="1.3" fill="none"/>
    <path d="M333 50.3L336.3 53.5L339.6 50.3" stroke="#eee" stroke-width="1.3" fill="none"/>
  </svg>
  <div class="a" style="left:210.5px;top:54px;font-size:8px;font-style:italic;color:#ddd;line-height:9px;font-family:'Liberation Serif',serif">fx</div>
  <div class="a" style="left:210.5px;top:100.5px;font-size:8px;font-style:italic;color:#ddd;line-height:9px;font-family:'Liberation Serif',serif">fx</div>
  <!-- ============ GRAPH AREA ============ -->
  <div class="a" style="left:358px;top:20px;width:1px;height:157.5px;background:#141414"></div>
  <div class="a" style="left:359px;top:20px;width:904px;height:6.5px;background:#1b1b1b"></div>
  <div class="a" style="left:359px;top:21px;width:905px;height:5px;background:#686868;border-radius:2px"></div>
  <div class="a" style="left:359px;top:21px;width:5px;height:5px;background:#5a95e0;border-radius:2.5px 0 0 2.5px"></div>
  <div class="a" style="left:1262.5px;top:21px;width:4.5px;height:5px;background:#5a95e0;border-radius:0 2.5px 2.5px 0"></div>
  <div class="a" style="left:359px;top:26px;width:921px;height:13.5px;background:#1c1c1c"></div>
  <div class="a" style="left:403.1px;top:28px;width:20px;text-align:center;font-size:6.3px;color:#c0c0c0;line-height:8px;letter-spacing:-0.25px">00:30s</div>
  <div class="a" style="left:412.6px;top:36.3px;width:1px;height:2.5px;background:#888"></div>
  <div class="a" style="left:452.7px;top:28px;width:20px;text-align:center;font-size:6.3px;color:#c0c0c0;line-height:8px;letter-spacing:-0.25px">01:00s</div>
  <div class="a" style="left:462.2px;top:36.3px;width:1px;height:2.5px;background:#888"></div>
  <div class="a" style="left:502.3px;top:28px;width:20px;text-align:center;font-size:6.3px;color:#c0c0c0;line-height:8px;letter-spacing:-0.25px">01:30s</div>
  <div class="a" style="left:511.8px;top:36.3px;width:1px;height:2.5px;background:#888"></div>
  <div class="a" style="left:551.9px;top:28px;width:20px;text-align:center;font-size:6.3px;color:#c0c0c0;line-height:8px;letter-spacing:-0.25px">02:00s</div>
  <div class="a" style="left:561.4px;top:36.3px;width:1px;height:2.5px;background:#888"></div>
  <div class="a" style="left:601.5px;top:28px;width:20px;text-align:center;font-size:6.3px;color:#c0c0c0;line-height:8px;letter-spacing:-0.25px">02:30s</div>
  <div class="a" style="left:611.0px;top:36.3px;width:1px;height:2.5px;background:#888"></div>
  <div class="a" style="left:651.1px;top:28px;width:20px;text-align:center;font-size:6.3px;color:#c0c0c0;line-height:8px;letter-spacing:-0.25px">03:00s</div>
  <div class="a" style="left:660.6px;top:36.3px;width:1px;height:2.5px;background:#888"></div>
  <div class="a" style="left:700.7px;top:28px;width:20px;text-align:center;font-size:6.3px;color:#c0c0c0;line-height:8px;letter-spacing:-0.25px">03:30s</div>
  <div class="a" style="left:710.2px;top:36.3px;width:1px;height:2.5px;background:#888"></div>
  <div class="a" style="left:750.3px;top:28px;width:20px;text-align:center;font-size:6.3px;color:#c0c0c0;line-height:8px;letter-spacing:-0.25px">04:00s</div>
  <div class="a" style="left:759.8px;top:36.3px;width:1px;height:2.5px;background:#888"></div>
  <div class="a" style="left:799.9px;top:28px;width:20px;text-align:center;font-size:6.3px;color:#c0c0c0;line-height:8px;letter-spacing:-0.25px">04:30s</div>
  <div class="a" style="left:809.4px;top:36.3px;width:1px;height:2.5px;background:#888"></div>
  <div class="a" style="left:849.5px;top:28px;width:20px;text-align:center;font-size:6.3px;color:#c0c0c0;line-height:8px;letter-spacing:-0.25px">05:00s</div>
  <div class="a" style="left:859.0px;top:36.3px;width:1px;height:2.5px;background:#888"></div>
  <div class="a" style="left:899.1px;top:28px;width:20px;text-align:center;font-size:6.3px;color:#c0c0c0;line-height:8px;letter-spacing:-0.25px">05:30s</div>
  <div class="a" style="left:908.6px;top:36.3px;width:1px;height:2.5px;background:#888"></div>
  <div class="a" style="left:948.7px;top:28px;width:20px;text-align:center;font-size:6.3px;color:#c0c0c0;line-height:8px;letter-spacing:-0.25px">06:00s</div>
  <div class="a" style="left:958.2px;top:36.3px;width:1px;height:2.5px;background:#888"></div>
  <div class="a" style="left:998.3px;top:28px;width:20px;text-align:center;font-size:6.3px;color:#c0c0c0;line-height:8px;letter-spacing:-0.25px">06:30s</div>
  <div class="a" style="left:1007.8px;top:36.3px;width:1px;height:2.5px;background:#888"></div>
  <div class="a" style="left:1047.9px;top:28px;width:20px;text-align:center;font-size:6.3px;color:#c0c0c0;line-height:8px;letter-spacing:-0.25px">07:00s</div>
  <div class="a" style="left:1057.4px;top:36.3px;width:1px;height:2.5px;background:#888"></div>
  <div class="a" style="left:1097.5px;top:28px;width:20px;text-align:center;font-size:6.3px;color:#c0c0c0;line-height:8px;letter-spacing:-0.25px">07:30s</div>
  <div class="a" style="left:1107.0px;top:36.3px;width:1px;height:2.5px;background:#888"></div>
  <div class="a" style="left:1147.1px;top:28px;width:20px;text-align:center;font-size:6.3px;color:#c0c0c0;line-height:8px;letter-spacing:-0.25px">08:00s</div>
  <div class="a" style="left:1156.6px;top:36.3px;width:1px;height:2.5px;background:#888"></div>
  <div class="a" style="left:1196.7px;top:28px;width:20px;text-align:center;font-size:6.3px;color:#c0c0c0;line-height:8px;letter-spacing:-0.25px">08:30s</div>
  <div class="a" style="left:1206.2px;top:36.3px;width:1px;height:2.5px;background:#888"></div>
  <div class="a" style="left:1246.3px;top:28px;width:20px;text-align:center;font-size:6.3px;color:#c0c0c0;line-height:8px;letter-spacing:-0.25px">09:00s</div>
  <div class="a" style="left:1255.8px;top:36.3px;width:1px;height:2.5px;background:#888"></div>
  <div class="a" style="left:361px;top:28px;font-size:6.3px;color:#c0c0c0;line-height:8px;letter-spacing:-0.25px">0:00s</div>
  <div class="a" style="left:359px;top:39.5px;width:904px;height:9.5px;background:#595959"></div>
  <div class="a" style="left:359px;top:40px;width:5px;height:9px;background:#5a95e0;border-radius:2px 0 0 2px"></div>
  <div class="a" style="left:1262.5px;top:40px;width:4.5px;height:9px;background:#5a95e0;border-radius:0 2px 2px 0"></div>
  <svg class="a" style="left:1269px;top:41px" width="9" height="10"><path d="M0.5 0.5L8.5 0.5L8.5 5.5L4.5 9.5L0.5 5.5Z" fill="#d8d8d8"/></svg>
  <div class="a" style="left:364px;top:49.5px;width:899px;height:3px;background:#2f6a2f"></div>
  <div class="a" style="left:364px;top:50px;width:899px;height:1.8px;background:#4fd34f"></div>
  <!-- rows -->
  <div class="a" style="left:359px;top:53px;width:904px;height:11.5px;background:#474747"></div>
  <div class="a" style="left:364px;top:54px;width:902px;height:10px;background:#8a3846"></div>
  <div class="a" style="left:359px;top:64.5px;width:904px;height:1px;background:#161616"></div>
  <div class="a" style="left:359px;top:65.5px;width:904px;height:10px;background:#222"></div>
  <div class="a" style="left:359px;top:75.3px;width:904px;height:1px;background:#181818"></div>
  <div class="a" style="left:359px;top:76.3px;width:904px;height:23.5px;background:#232323"></div>
  <div class="a" style="left:359px;top:99.5px;width:904px;height:1px;background:#171717"></div>
  <div class="a" style="left:359px;top:100.3px;width:904px;height:10px;background:#2e2e2e"></div>
  <div class="a" style="left:364px;top:100.3px;width:902px;height:10px;background:#5f2b36"></div>
  <div class="a" style="left:359px;top:110.3px;width:904px;height:1px;background:#171717"></div>
  <div class="a" style="left:359px;top:111.3px;width:904px;height:66px;background:#232323"></div>
  <div class="a" style="left:1263px;top:49px;width:17px;height:128.5px;background:#1d1d1d"></div>
  <div class="a" style="left:1263px;top:53.5px;width:3px;height:11px;background:#6a4048"></div>
  <div class="a" style="left:1263px;top:100.3px;width:3px;height:10px;background:#4a3036"></div>
  <svg class="a" style="left:1269px;top:56px" width="10" height="9"><path d="M0.5 4.5L4 1L9 1L9 8L4 8Z" stroke="#ddd" stroke-width="1" fill="#1d1d1d"/><rect x="5" y="3" width="3" height="3" fill="#ddd"/></svg>
  <div class="a" style="left:367px;top:77.5px;font-family:'Liberation Mono',monospace;font-size:8.2px;font-weight:bold;color:#d8d8d8;line-height:10px;letter-spacing:-0.1px">wiggle(20)</div>
  <!-- playhead -->
  <div class="a" style="left:363px;top:37px;width:1px;height:140.5px;background:#9fb4d0"></div>
  <svg class="a" style="left:358.5px;top:28.5px" width="10" height="11"><path d="M0.5 0.5L9.5 0.5L9.5 4.5L5 10.5L0.5 4.5Z" fill="#5a95e0"/></svg>
  <svg class="a" style="left:361px;top:66px" width="6" height="8"><path d="M0.5 0.5L5.5 0.5M3 0.5L3 7.5M0.5 7.5L5.5 7.5" stroke="#ddd" stroke-width="1"/></svg>
  <!-- bottom bar -->
  <div class="a" style="left:0;top:177.5px;width:1280px;height:1px;background:#161616"></div>
  <svg class="a" style="left:0;top:178px" width="440" height="13">
    <rect x="3.5" y="0.5" width="12" height="12" rx="1.5" fill="#3a3a3a"/><path d="M6 3.5L12 3.5L12 9.5L6 9.5Z" stroke="#bbb" stroke-width="1" fill="none"/><path d="M6 9.5L12 3.5" stroke="#bbb" stroke-width="1"/>
    <circle cx="21.5" cy="5.5" r="2.7" stroke="#bbb" stroke-width="1" fill="none"/><rect x="21.5" y="5.5" width="4.5" height="4.5" stroke="#bbb" stroke-width="1" fill="#1f1f1f"/>
    <path d="M33 3L31.5 6.5L33 10M37 3L38.5 6.5L37 10" stroke="#bbb" stroke-width="1" fill="none"/>
    <path d="M43.5 9L45 4L49 4L50 9Z" fill="#bbb"/><path d="M50 5L52 3.5" stroke="#bbb" stroke-width="1"/>
    
    <g fill="#ccc"><path d="M364 7L366.5 4.5L369 7Z"/><path d="M415 7L418.5 3L422 7Z M419 7L422 4L425 7Z"/></g>
    <circle cx="376.5" cy="6" r="2.2" stroke="#ddd" stroke-width="1" fill="#1f1f1f"/>
    <rect x="379" y="5.7" width="35" height="0.7" fill="#555"/>
  </svg>
  <div class="a t" style="left:70px;top:180.5px;color:#c4c4c4;font-size:7.25px">Frame Render Time: <b style="color:#33d08a">0ms</b></div>
  <div class="a t" style="left:182.5px;top:180.5px;color:#d4d4d4;font-size:7.3px">Toggle Switches / Modes</div>
</div>
<div class="a" style="left:24.5px;top:709px;width:172px;height:1px;background:#8a8a8a"></div>
</body></html>
